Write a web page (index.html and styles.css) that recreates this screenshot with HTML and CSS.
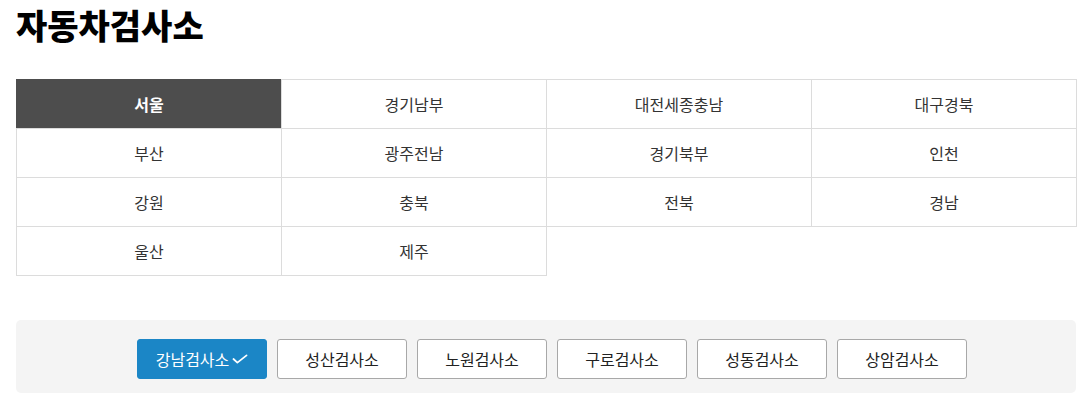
FILE: index.html
```html
<!DOCTYPE html>
<html lang="ko">
<head>
<meta charset="utf-8">
<title>자동차검사소</title>
<link rel="stylesheet" href="styles.css">
</head>
<body>
<h1 class="title">자동차검사소</h1>
<div class="regions">
  <div class="region active">서울</div>
  <div class="region">경기남부</div>
  <div class="region">대전세종충남</div>
  <div class="region">대구경북</div>
  <div class="region">부산</div>
  <div class="region">광주전남</div>
  <div class="region">경기북부</div>
  <div class="region">인천</div>
  <div class="region">강원</div>
  <div class="region">충북</div>
  <div class="region">전북</div>
  <div class="region">경남</div>
  <div class="region">울산</div>
  <div class="region">제주</div>
</div>
<div class="centers">
  <button class="center active">강남검사소<svg class="check" viewBox="0 0 18 16" width="16" height="14"><path d="M1.5 8 L6 12.2 L16.5 3.8" fill="none" stroke="#fff" stroke-width="2" stroke-linecap="round" stroke-linejoin="round"/></svg></button>
  <button class="center">성산검사소</button>
  <button class="center">노원검사소</button>
  <button class="center">구로검사소</button>
  <button class="center">성동검사소</button>
  <button class="center">상암검사소</button>
</div>
</body>
</html>
```
FILE: styles.css
```css
html, body {
  margin: 0;
  padding: 0;
  background: #fff;
}
body {
  padding: 0 16px;
  font-family: "Noto Sans CJK KR", "Noto Sans", sans-serif;
  color: #333;
}
.title {
  margin: 0;
  font-size: 34px;
  line-height: 50px;
  font-weight: 900;
  color: #000;
}
.regions {
  margin-top: 29px;
  display: grid;
  grid-template-columns: repeat(4, 265px);
  grid-auto-rows: 49px;
  padding: 1px 0 0 1px;
  width: 1060px;
}
.region {
  margin: -1px 0 0 -1px;
  border: 1px solid #dcdcdc;
  display: flex;
  align-items: center;
  justify-content: center;
  font-size: 16px;
  color: #333;
}
.region.active {
  background: #4d4d4d;
  border-color: #4d4d4d;
  color: #fff;
  font-weight: 700;
}
.centers {
  margin-top: 44px;
  background: #f4f4f4;
  border-radius: 5px;
  padding: 19px 0 14px 12px;
  display: flex;
  justify-content: center;
  gap: 10px;
}
.center {
  width: 130px;
  height: 40px;
  box-sizing: border-box;
  border: 1px solid #a8a8a8;
  border-radius: 3px;
  background: #fff;
  font-family: "Noto Sans CJK KR", "Noto Sans", sans-serif;
  font-size: 16px;
  color: #222;
  display: flex;
  align-items: center;
  justify-content: center;
  padding: 0;
}
.center.active {
  background: #1b86c6;
  border-color: #1b86c6;
  color: #fff;
  gap: 3px;
}
.check {
  display: block;
}
```
